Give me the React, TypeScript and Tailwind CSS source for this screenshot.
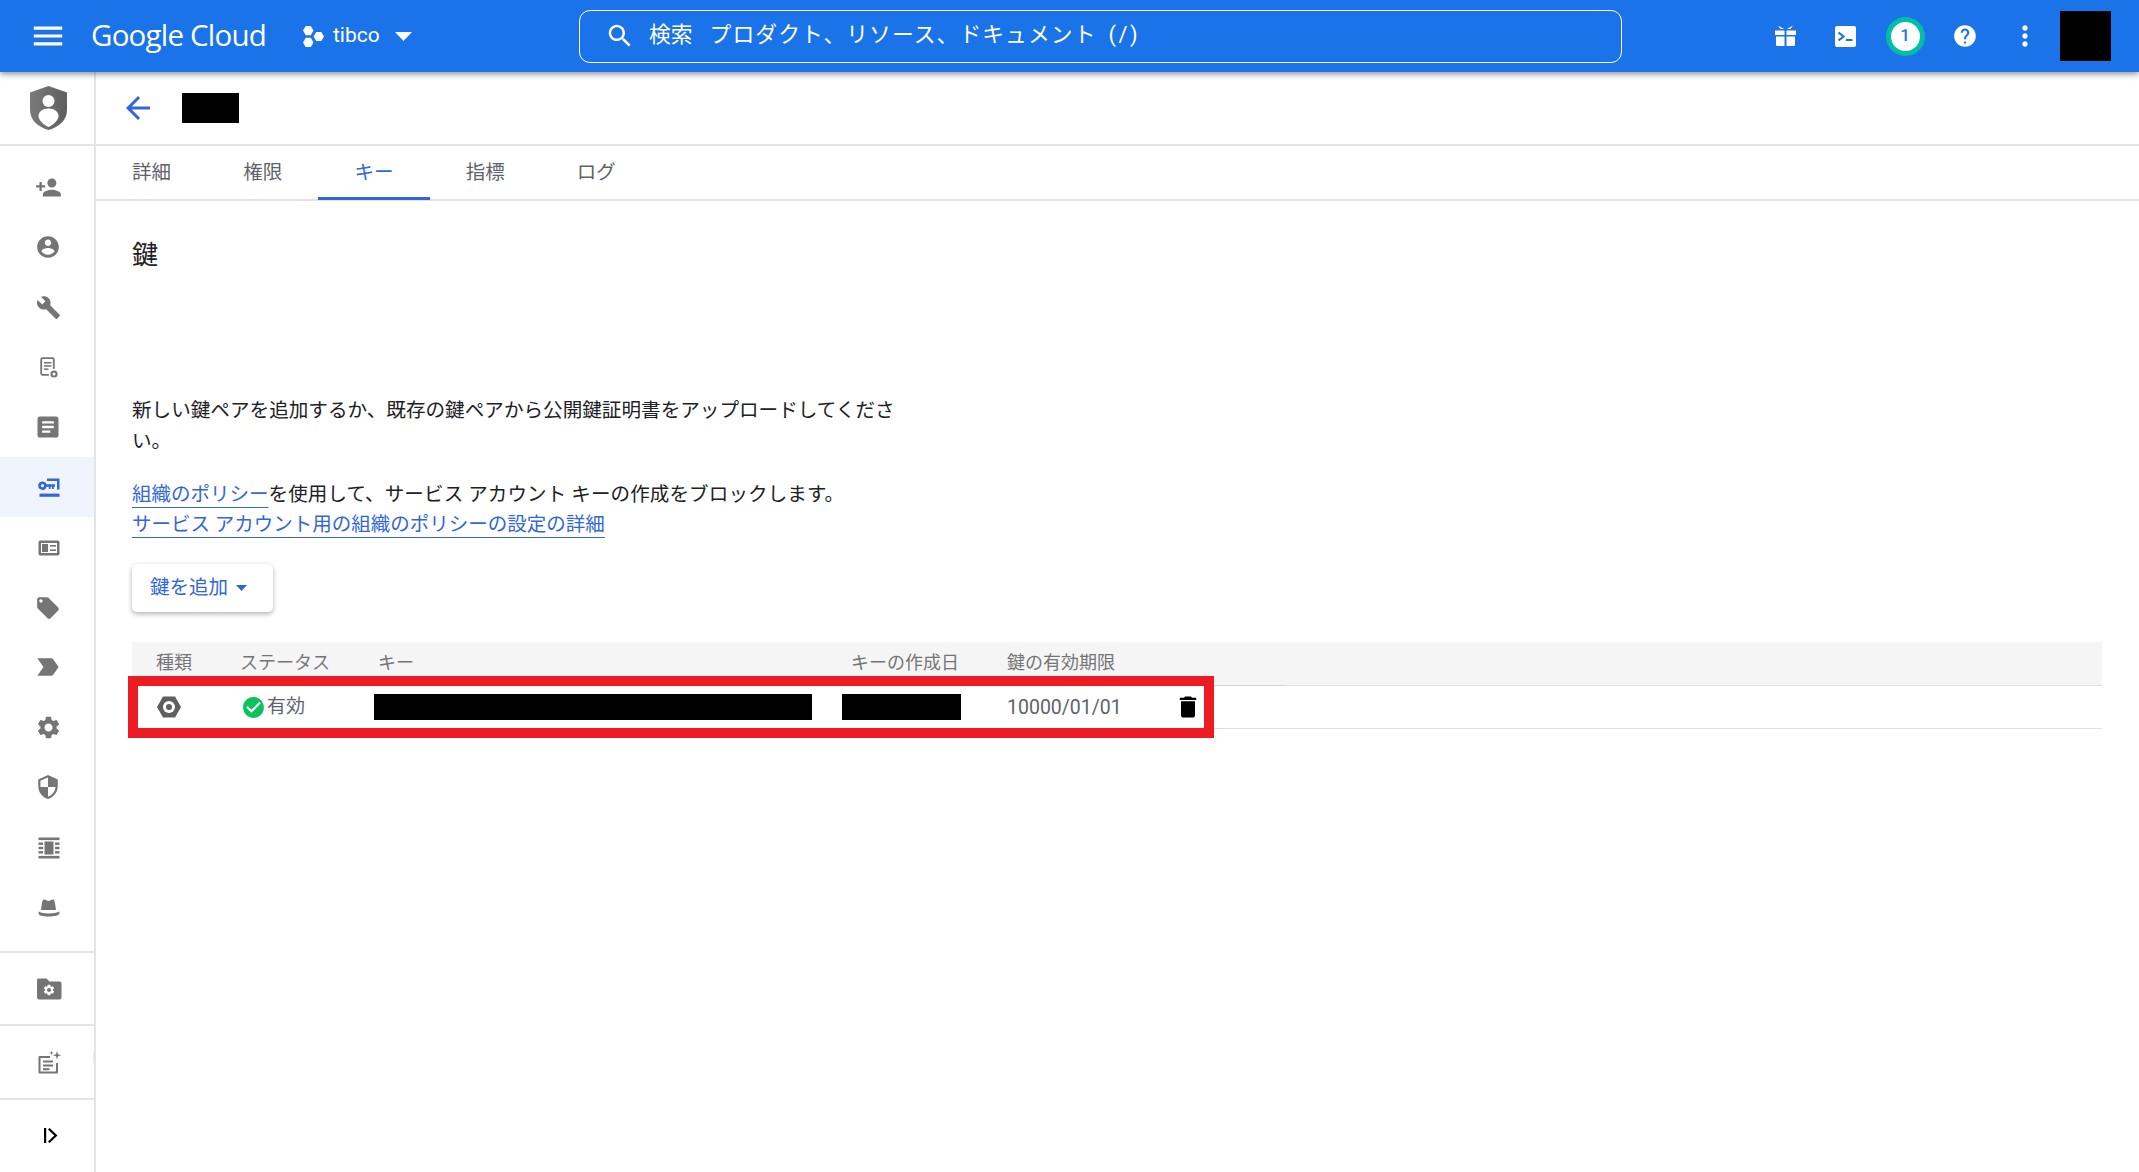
import React from "react";

const P = {
  menu: "M3 18h18v-2H3v2zm0-5h18v-2H3v2zm0-7v2h18V6H3z",
  search: "M15.5 14h-.79l-.28-.27C15.41 12.59 16 11.11 16 9.5 16 5.91 13.09 3 9.5 3S3 5.91 3 9.5 5.91 16 9.5 16c1.61 0 3.09-.59 4.23-1.57l.27.28v.79l5 4.99L20.49 19l-4.99-5zm-6 0C7.01 14 5 11.99 5 9.5S7.01 5 9.5 5 14 7.01 14 9.5 11.99 14 9.5 14z",
  help: "M12 2C6.48 2 2 6.48 2 12s4.48 10 10 10 10-4.48 10-10S17.52 2 12 2zm1 17h-2v-2h2v2zm2.07-7.75l-.9.92C13.45 12.9 13 13.5 13 15h-2v-.5c0-1.1.45-2.1 1.17-2.83l1.24-1.26c.37-.36.59-.86.59-1.41 0-1.1-.9-2-2-2s-2 .9-2 2H8c0-2.21 1.79-4 4-4s4 1.79 4 4c0 .88-.36 1.68-.93 2.25z",
  more: "M12 8c1.1 0 2-.9 2-2s-.9-2-2-2-2 .9-2 2 .9 2 2 2zm0 2c-1.1 0-2 .9-2 2s.9 2 2 2 2-.9 2-2-.9-2-2-2zm0 6c-1.1 0-2 .9-2 2s.9 2 2 2 2-.9 2-2-.9-2-2-2z",
  back: "M20 11H7.83l5.59-5.59L12 4l-8 8 8 8 1.41-1.41L7.83 13H20v-2z",
  personAdd: "M15 12c2.21 0 4-1.79 4-4s-1.79-4-4-4-4 1.79-4 4 1.79 4 4 4zm-9-2V7H4v3H1v2h3v3h2v-3h3v-2H6zm9 4c-2.67 0-8 1.34-8 4v2h16v-2c0-2.66-5.33-4-8-4z",
  account: "M12 2C6.48 2 2 6.48 2 12s4.48 10 10 10 10-4.48 10-10S17.52 2 12 2zm0 3c1.66 0 3 1.34 3 3s-1.34 3-3 3-3-1.34-3-3 1.34-3 3-3zm0 14.2c-2.5 0-4.71-1.28-6-3.22.03-1.99 4-3.08 6-3.08 1.99 0 5.97 1.09 6 3.08-1.29 1.94-3.5 3.22-6 3.22z",
  build: "M22.7 19l-9.1-9.1c.9-2.3.4-5-1.5-6.9-2-2-5-2.4-7.4-1.3L9 6 6 9 1.6 4.7C.4 7.1.9 10.1 2.9 12.1c1.9 1.9 4.6 2.4 6.9 1.5l9.1 9.1c.4.4 1 .4 1.4 0l2.3-2.3c.5-.4.5-1.1.1-1.4z",
  article: "M19 3H5c-1.1 0-2 .9-2 2v14c0 1.1.9 2 2 2h14c1.1 0 2-.9 2-2V5c0-1.1-.9-2-2-2zm-5 14H7v-2h7v2zm3-4H7v-2h10v2zm0-4H7V7h10v2z",
  tag: "M21.41 11.58l-9-9C12.05 2.22 11.55 2 11 2H4c-1.1 0-2 .9-2 2v7c0 .55.22 1.05.59 1.42l9 9c.36.36.86.58 1.41.58.55 0 1.05-.22 1.41-.59l7-7c.37-.36.59-.86.59-1.41 0-.55-.23-1.06-.59-1.42zM5.5 7C4.67 7 4 6.33 4 5.5S4.67 4 5.5 4 7 4.67 7 5.5 6.33 7 5.5 7z",
  important: "M3.5 18.99l11 .01c.67 0 1.27-.33 1.63-.84L20.5 12l-4.37-6.16c-.36-.51-.96-.84-1.63-.84l-11 .01L8.34 12 3.5 18.99z",
  gear: "M19.14 12.94c.04-.3.06-.61.06-.94 0-.32-.02-.64-.07-.94l2.03-1.58c.18-.14.23-.41.12-.61l-1.92-3.32c-.12-.22-.37-.29-.59-.22l-2.39.96c-.5-.38-1.03-.7-1.62-.94l-.36-2.54c-.04-.24-.24-.41-.48-.41h-3.84c-.24 0-.43.17-.47.41l-.36 2.54c-.59.24-1.13.57-1.62.94l-2.39-.96c-.22-.08-.47 0-.59.22L2.74 8.87c-.12.21-.08.47.12.61l2.03 1.58c-.05.3-.09.63-.09.94s.02.64.07.94l-2.03 1.58c-.18.14-.23.41-.12.61l1.92 3.32c.12.22.37.29.59.22l2.39-.96c.5.38 1.03.7 1.62.94l.36 2.54c.05.24.24.41.48.41h3.84c.24 0 .44-.17.47-.41l.36-2.54c.59-.24 1.13-.56 1.62-.94l2.39.96c.22.08.47 0 .59-.22l1.92-3.32c.12-.22.07-.47-.12-.61l-2.01-1.58zM12 15.6c-1.98 0-3.6-1.62-3.6-3.6s1.62-3.6 3.6-3.6 3.6 1.62 3.6 3.6-1.62 3.6-3.6 3.6z",
  security: "M12 1L3 5v6c0 5.55 3.84 10.74 9 12 5.16-1.26 9-6.45 9-12V5l-9-4zm0 10.99h7c-.53 4.12-3.28 7.79-7 8.94V12H5V6.3l7-3.11v8.8z",
  trash: "M6 19c0 1.1.9 2 2 2h8c1.1 0 2-.9 2-2V7H6v12zM19 4h-3.5l-1-1h-5l-1 1H5v2h14V4z",
  check: "M12 2C6.48 2 2 6.48 2 12s4.48 10 10 10 10-4.48 10-10S17.52 2 12 2zm-2 15l-5-5 1.41-1.41L10 14.17l7.59-7.59L19 8l-9 9z",
};

const G = "#757575";
const B = "#3367d6";

function M({ d, size = 27, color = G, className = "" }: { d: string; size?: number; color?: string; className?: string }) {
  return (
    <svg width={size} height={size} viewBox="0 0 24 24" fill={color} className={"flex-none " + className}>
      <path d={d} />
    </svg>
  );
}

function Box({ children, color = G }: { children: React.ReactNode; color?: string }) {
  return (
    <svg width={27} height={27} viewBox="0 0 27 27" fill={color} className="flex-none">
      {children}
    </svg>
  );
}

const items: { node: React.ReactNode; active?: boolean }[] = [
  { node: <M d={P.personAdd} /> },
  { node: <M d={P.account} size={26} /> },
  { node: <M d={P.build} size={25} /> },
  {
    node: (
      <Box>
        <rect x="6.2" y="4.2" width="12.6" height="16.6" rx="1.2" fill="none" stroke={G} strokeWidth="1.8" />
        <rect x="9" y="8" width="7.5" height="1.5" />
        <rect x="9" y="11.2" width="7.5" height="1.5" />
        <rect x="9" y="14.4" width="4.5" height="1.5" />
        <circle cx="19" cy="20" r="5.2" fill="#fff" />
        <circle cx="19" cy="20" r="3.6" />
        <circle cx="19" cy="20" r="1.5" fill="#fff" />
      </Box>
    ),
  },
  { node: <M d={P.article} size={28} /> },
  {
    active: true,
    node: (
      <Box color={B}>
        <path d="M12 4.5h12.5V15.5H22V7h-10z" />
        <path fillRule="evenodd" d="M7.5 7.5a4.2 4.2 0 0 1 4 2.8H20v2.4h-1.2v2.3h-1.8v-2.3h-1.4v2.3h-1.8v-2.3h-2.3a4.2 4.2 0 1 1-4.5-5.2zm0 2.6a1.6 1.6 0 1 0 0 3.2 1.6 1.6 0 0 0 0-3.2z" />
        <rect x="4.5" y="19.6" width="20" height="3.2" />
      </Box>
    ),
  },
  {
    node: (
      <Box>
        <rect x="3.5" y="6.5" width="21" height="15" rx="2" />
        <rect x="6" y="9" width="16" height="10" fill="#fff" />
        <rect x="7" y="10" width="6" height="8" />
        <rect x="15" y="11" width="6" height="1.6" />
        <rect x="15" y="15.4" width="6" height="1.6" />
      </Box>
    ),
  },
  { node: <M d={P.tag} size={26} className="mt-[2px]" /> },
  { node: <M d={P.important} size={30} /> },
  { node: <M d={P.gear} size={27} /> },
  { node: <M d={P.security} size={26} /> },
  {
    node: (
      <Box>
        <rect x="3.5" y="3.5" width="21" height="2.6" />
        <rect x="3.5" y="21.9" width="21" height="2.6" />
        <rect x="9.5" y="7.5" width="9" height="13" />
        <rect x="3.5" y="8.5" width="4.5" height="2.4" />
        <rect x="3.5" y="12.8" width="4.5" height="2.4" />
        <rect x="3.5" y="17.1" width="4.5" height="2.4" />
        <rect x="20" y="8.5" width="4.5" height="2.4" />
        <rect x="20" y="12.8" width="4.5" height="2.4" />
        <rect x="20" y="17.1" width="4.5" height="2.4" />
      </Box>
    ),
  },
  {
    node: (
      <Box>
        <path d="M9 5.5C11 5.5 12 7 13.5 7S16 5.5 18 5.5c1.5 0 2 2.5 3 10.5H6C7 8 7.5 5.5 9 5.5z" />
        <path d="M3.5 17.5C7 20 20 20 24.5 17.5V19c0 2.5-4.5 3.5-11 3.5S3.5 21.5 3.5 19z" />
      </Box>
    ),
  },
];

export default function App() {
  const font = { fontFamily: "Roboto, 'Noto Sans CJK JP', sans-serif" };
  return (
    <div className="flex flex-col h-screen overflow-hidden bg-white" style={font}>
      <header className="relative z-10 flex-none h-[72px] bg-[#1a73e8] flex items-center pl-[29px] pr-[28px] text-white shadow-[0_2px_6px_rgba(0,0,0,0.45)]">
        <M d={P.menu} size={38} color="#fff" />
        <span className="ml-[24px] -mt-[1px] w-[175px] flex-none text-[29.5px] tracking-[-0.8px] whitespace-nowrap" style={{ fontFamily: "'Open Sans', sans-serif" }}>
          Google Cloud
        </span>
        <svg width="21" height="21" viewBox="0 0 21 21" fill="#fff" className="ml-[37px] flex-none">
          <polygon points="2.7,0 7.8,0 10.5,4.6 7.8,9.2 2.7,9.2 0,4.6" />
          <polygon points="2.7,11.8 7.8,11.8 10.5,16.4 7.8,21 2.7,21 0,16.4" />
          <polygon points="13.2,5.9 18.3,5.9 21,10.5 18.3,15.1 13.2,15.1 10.5,10.5" />
        </svg>
        <span className="ml-[9px] w-[46px] text-[21px] flex-none">tibco</span>
        <svg width="17" height="9" viewBox="0 0 17 9" fill="#fff" className="ml-[16px] flex-none">
          <polygon points="0,0 17,0 8.5,9" />
        </svg>
        <div className="ml-[167px] flex-none w-[1043px] h-[53px] border border-white rounded-[11px] flex items-center pl-[25px]">
          <M d={P.search} size={30} color="#fff" />
          <span className="ml-[14px] -mt-[2px] text-[21.8px] whitespace-nowrap">検索</span>
          <span className="ml-[17px] -mt-[2px] text-[21.8px] tracking-[1.05px] whitespace-nowrap">プロダクト、リソース、ドキュメント</span>
          <span className="ml-[12px] -mt-[2px] text-[21.8px] tracking-[2.5px] whitespace-nowrap">(/)</span>
        </div>
        <div className="ml-auto flex items-center">
          <div className="w-[60px] flex justify-center -mt-[1px]">
            <svg width="21" height="21" viewBox="0 0 21 21" fill="#fff">
              <rect x="0" y="5.5" width="9.5" height="4.5" />
              <rect x="11.5" y="5.5" width="9.5" height="4.5" />
              <path d="M1 11.5h8.5V21H2a1 1 0 0 1-1-1z" />
              <path d="M11.5 11.5H20V20a1 1 0 0 1-1 1h-7.5z" />
              <path d="M3 0.5l6 3.5H5.5zM18 0.5l-6 3.5h3.5z" />
            </svg>
          </div>
          <div className="w-[60px] flex justify-center">
            <svg width="21" height="21" viewBox="0 0 21 21">
              <rect width="21" height="21" rx="2" fill="#fff" />
              <path d="M3.5 6.5l5 4-5 4" fill="none" stroke="#1a73e8" strokeWidth="2.2" />
              <rect x="11" y="13" width="6.5" height="2" fill="#1a73e8" />
            </svg>
          </div>
          <div className="w-[60px] flex justify-center">
            <div className="w-[39px] h-[39px] rounded-full bg-white border-[5px] border-[#00bfa5] flex items-center justify-center text-[#1a73e8] text-[17px] font-medium">
              1
            </div>
          </div>
          <div className="w-[60px] flex justify-center">
            <M d={P.help} size={26} color="#fff" />
          </div>
          <div className="w-[60px] flex justify-center">
            <M d={P.more} size={32} color="#fff" />
          </div>
          <div className="ml-[5px] w-[51px] h-[50px] bg-black" />
        </div>
      </header>

      <div className="flex flex-1 min-h-0">
        <aside className="relative flex-none w-[96px] border-r-2 border-[#e4e4e4] flex flex-col">
          <div className="h-[74px] flex-none border-b-2 border-[#e4e4e4] flex items-center justify-center pl-[2px]">
            <svg width="37" height="44" viewBox="0 0 37 44" className="flex-none -mt-[1px]">
              <defs>
                <linearGradient id="sh" x1="0" x2="1" y1="0" y2="0">
                  <stop offset="0" stopColor="#7a7a7a" />
                  <stop offset="1" stopColor="#5f5f5f" />
                </linearGradient>
              </defs>
              <path d="M18.5 0L37 6.5V24C37 34 29 41 18.5 44 8 41 0 34 0 24V6.5z" fill="url(#sh)" />
              <circle cx="18.5" cy="15" r="6" fill="#fff" />
              <path d="M18.5 22.5c6 0 10 3.2 10 7.5 0 4-4.5 8.5-10 11-5.5-2.5-10-7-10-11 0-4.3 4-7.5 10-7.5z" fill="#fff" />
            </svg>
          </div>
          <nav className="pt-[11px] flex flex-col">
            {items.map((it, i) => (
              <div key={i} className={"h-[60px] flex items-center justify-center pl-[2px] " + (it.active ? "bg-[#eff4fd]" : "")}>
                {it.node}
              </div>
            ))}
          </nav>
          <div className="mt-[14px] h-[73px] border-t-2 border-[#e4e4e4] flex items-center justify-center pl-[2px]">
            <Box>
              <path d="M3.5 3.5h8l3 3h10a2 2 0 0 1 2 2v14a2 2 0 0 1-2 2H4a2 2 0 0 1-2-2V5a1.5 1.5 0 0 1 1.5-1.5z" />
              <g transform="translate(7.4 8.4) scale(.55)">
                <path d={P.gear} fill="#fff" />
              </g>
            </Box>
          </div>
          <div className="h-[74px] border-t-2 border-[#e4e4e4] flex items-center justify-center pl-[2px]">
            <Box>
              <path d="M15 7H4.5a1 1 0 0 0-1 1v15.5a1 1 0 0 0 1 1H22a1 1 0 0 0 1-1V14h-2v8.5H5.5V9H15z" />
              <rect x="8" y="11.5" width="10" height="2" />
              <rect x="8" y="15.5" width="10" height="2" />
              <rect x="8" y="19.2" width="6.5" height="2" />
              <path d="M22 2l1 3.2 3.2 1-3.2 1-1 3.2-1-3.2-3.2-1 3.2-1z" />
              <path d="M16.5 1.5l.6 1.9 1.9.6-1.9.6-.6 1.9-.6-1.9-1.9-.6 1.9-.6z" />
            </Box>
          </div>
          <div className="h-[73px] border-t-2 border-[#e4e4e4] flex items-center justify-center pl-[2px]">
            <Box color="#000">
              <rect x="9" y="6" width="2.2" height="15" />
              <path d="M14.5 6l8 7.5-8 7.5-1.5-1.6 6.3-5.9L13 7.6z" />
            </Box>
          </div>
          <span className="absolute right-0 top-[981px] w-[1px] h-[10px] bg-[#fce8d2]" />
        </aside>

        <main className="flex-1 min-w-0 flex flex-col">
          <div className="h-[74px] flex-none border-b-2 border-[#e4e4e4] flex items-center pl-[24px]">
            <M d={P.back} size={36} color={B} />
            <div className="ml-[26px] w-[57px] h-[30px] bg-black" />
          </div>
          <div className="h-[55px] flex-none border-b-2 border-[#e4e4e4] flex">
            {["詳細", "権限", "キー", "指標", "ログ"].map((t, i) => (
              <div
                key={t}
                className={
                  "w-[111.2px] h-[54px] flex items-center justify-center text-[19.5px] " +
                  (i === 2 ? "text-[#3367d6] border-b-[3px] border-[#3367d6] pt-[3px]" : "text-[#5f6368]")
                }
              >
                {t}
              </div>
            ))}
          </div>
          <section className="flex-1 pl-[36px] pr-[37px] pt-[36px]">
            <h2 className="text-[26px] leading-[36px] text-[#202124]">鍵</h2>
            <p className="mt-[122px] w-[770px] text-[19.6px] leading-[31px] text-[#202124]">
              新しい鍵ペアを追加するか、既存の鍵ペアから公開鍵証明書をアップロードしてください。
            </p>
            <p className="mt-[23px] text-[19.5px] leading-[30px] text-[#202124] whitespace-nowrap">
              <a className="text-[#3367d6] underline decoration-1 underline-offset-[6px]">組織のポリシー</a>
              <span className="tracking-[0.13px]">を使用して、サービス アカウント キーの作成をブロックします。</span>
              <br />
              <a className="text-[#3367d6] underline decoration-1 underline-offset-[6px]">サービス アカウント用の組織のポリシーの設定の詳細</a>
            </p>
            <button className="mt-[24px] h-[48px] w-[141px] rounded-[5px] bg-white shadow-[0_2px_5px_rgba(0,0,0,0.3)] flex items-center pl-[18px] text-[#3367d6] text-[19.5px]">
              鍵を追加
              <svg width="11" height="6" viewBox="0 0 11 6" fill="#3367d6" className="ml-[8px]">
                <polygon points="0,0 11,0 5.5,6" />
              </svg>
            </button>
            <div className="relative mt-[30px] text-[18px] text-[#5f6368]">
              <div className="relative h-[44px] bg-[#f5f5f5] border-b border-[#e0e0e0] grid grid-cols-[84px_138px_473px_156px_1fr] items-center pb-[3px]">
                {["種類", "ステータス", "キー", "キーの作成日", "鍵の有効期限"].map((t) => (
                  <div key={t} className="pl-[24px] whitespace-nowrap text-[#757575]">
                    {t}
                  </div>
                ))}
                <span className="absolute left-0 bottom-[-1px] w-[1152px] h-[1px] bg-[#d4d4d4]" />
              </div>
              <div className="h-[43px] border-b border-[#e0e0e0] grid grid-cols-[84px_138px_473px_156px_1fr] items-center">
                <div className="pl-[24px]">
                  <svg width="26" height="24" viewBox="0 0 26 24" className="block">
                    <path d="M7 1.5h12l6 10.5-6 10.5H7L1 12z" fill="#5f5f5f" />
                    <circle cx="13" cy="12" r="6" fill="#fff" />
                    <circle cx="13" cy="12" r="3" fill="#5f5f5f" />
                  </svg>
                </div>
                <div className="pl-[24px] flex items-center">
                  <M d={P.check} size={25} color="#0cc25c" className="ml-[1px]" />
                  <span className="ml-[1px] mt-[1px] text-[19px]">有効</span>
                </div>
                <div className="pl-[20px]">
                  <div className="w-[438px] h-[26px] bg-black" />
                </div>
                <div className="pl-[15px]">
                  <div className="w-[119px] h-[26px] bg-black" />
                </div>
                <div className="pl-[24px] flex items-center text-[19.5px]">
                  <span className="w-[171px] mt-[1px]">10000/01/01</span>
                  <M d={P.trash} size={28} color="#000" className="-ml-[4px]" />
                </div>
              </div>
              <div className="absolute left-[-4px] top-[34px] w-[1086px] h-[62px] border-[10px] border-[#ed1c24]" />
            </div>
          </section>
        </main>
      </div>
    </div>
  );
}
